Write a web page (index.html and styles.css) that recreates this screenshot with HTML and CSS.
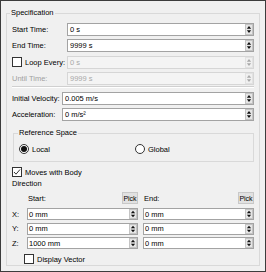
FILE: index.html
```html
<!DOCTYPE html>
<html>
<head>
<meta charset="utf-8">
<link rel="stylesheet" href="styles.css">
</head>
<body>
<div class="frame">
  <fieldset class="group">
    <legend>Specification</legend>
    <div class="form">
      <div class="row"><span class="lbl w55">Start Time:</span><div class="spin"><span class="val">0 s</span><span class="arr"><svg width="7" height="11" viewBox="0 0 7 11"><path d="M1 4.5 L3.5 1.5 L6 4.5 Z M1 6.5 L3.5 9.5 L6 6.5 Z"/></svg></span></div></div>
      <div class="row"><span class="lbl w55">End Time:</span><div class="spin"><span class="val">9999 s</span><span class="arr"><svg width="7" height="11" viewBox="0 0 7 11"><path d="M1 4.5 L3.5 1.5 L6 4.5 Z M1 6.5 L3.5 9.5 L6 6.5 Z"/></svg></span></div></div>
      <div class="row"><label class="chk w55"><span class="box"></span>Loop Every:</label><div class="spin dis"><span class="val">0 s</span><span class="arr"><svg width="7" height="11" viewBox="0 0 7 11"><path d="M1 4.5 L3.5 1.5 L6 4.5 Z M1 6.5 L3.5 9.5 L6 6.5 Z"/></svg></span></div></div>
      <div class="row"><span class="lbl w55 muted">Until Time:</span><div class="spin dis"><span class="val">9999 s</span><span class="arr"><svg width="7" height="11" viewBox="0 0 7 11"><path d="M1 4.5 L3.5 1.5 L6 4.5 Z M1 6.5 L3.5 9.5 L6 6.5 Z"/></svg></span></div></div>
    </div>
    <div class="sep"></div>
    <div class="form">
      <div class="row"><span class="lbl w50">Initial Velocity:</span><div class="spin"><span class="val">0.005 m/s</span><span class="arr"><svg width="7" height="11" viewBox="0 0 7 11"><path d="M1 4.5 L3.5 1.5 L6 4.5 Z M1 6.5 L3.5 9.5 L6 6.5 Z"/></svg></span></div></div>
      <div class="row"><span class="lbl w50">Acceleration:</span><div class="spin"><span class="val">0 m/s²</span><span class="arr"><svg width="7" height="11" viewBox="0 0 7 11"><path d="M1 4.5 L3.5 1.5 L6 4.5 Z M1 6.5 L3.5 9.5 L6 6.5 Z"/></svg></span></div></div>
    </div>
    <fieldset class="sub">
      <legend>Reference Space</legend>
      <div class="radios">
        <label class="rad"><span class="circle on"></span>Local</label>
        <label class="rad"><span class="circle"></span>Global</label>
      </div>
    </fieldset>
    <label class="chk moves"><span class="box"><svg width="8" height="8" viewBox="0 0 8 8"><path d="M1 4 L3 6.2 L7 1.5" fill="none" stroke="#333" stroke-width="1"/></svg></span>Moves with Body</label>
    <div class="dir-title">Direction</div>
    <div class="vec">
      <span class="axis"></span>
      <div class="vhead"><span class="htxt">Start:</span><span class="pick">Pick</span></div>
      <div class="vhead"><span class="htxt">End:</span><span class="pick">Pick</span></div>

      <span class="axis">X:</span>
      <div class="spin sm"><span class="val">0 mm</span><span class="arr"><svg width="7" height="10" viewBox="0 0 7 10"><path d="M1 4 L3.5 1.2 L6 4 Z M1 6 L3.5 8.8 L6 6 Z"/></svg></span></div>
      <div class="spin sm"><span class="val">0 mm</span><span class="arr"><svg width="7" height="10" viewBox="0 0 7 10"><path d="M1 4 L3.5 1.2 L6 4 Z M1 6 L3.5 8.8 L6 6 Z"/></svg></span></div>

      <span class="axis">Y:</span>
      <div class="spin sm"><span class="val">0 mm</span><span class="arr"><svg width="7" height="10" viewBox="0 0 7 10"><path d="M1 4 L3.5 1.2 L6 4 Z M1 6 L3.5 8.8 L6 6 Z"/></svg></span></div>
      <div class="spin sm"><span class="val">0 mm</span><span class="arr"><svg width="7" height="10" viewBox="0 0 7 10"><path d="M1 4 L3.5 1.2 L6 4 Z M1 6 L3.5 8.8 L6 6 Z"/></svg></span></div>

      <span class="axis">Z:</span>
      <div class="spin sm"><span class="val">1000 mm</span><span class="arr"><svg width="7" height="10" viewBox="0 0 7 10"><path d="M1 4 L3.5 1.2 L6 4 Z M1 6 L3.5 8.8 L6 6 Z"/></svg></span></div>
      <div class="spin sm"><span class="val">0 mm</span><span class="arr"><svg width="7" height="10" viewBox="0 0 7 10"><path d="M1 4 L3.5 1.2 L6 4 Z M1 6 L3.5 8.8 L6 6 Z"/></svg></span></div>
    </div>
    <label class="chk display"><span class="box"></span>Display Vector</label>
  </fieldset>
</div>
</body>
</html>
```
FILE: styles.css
```css
* { box-sizing: border-box; }
body {
  margin: 0;
  font-family: "Liberation Sans", Arial, sans-serif;
  font-size: 7.5px;
  color: #000;
  background: #f0f0f0;
}
.frame {
  width: 266px;
  height: 272px;
  border: 1px solid #3c3c3c;
  background: #f0f0f0;
  padding: 7px 5px 0 5px;
}
.group {
  margin: 0;
  height: 258px;
  border: 1px solid #d9d9d9;
  padding: 5px 5px 0 5px;
  min-width: 0;
}
.group > legend {
  padding: 0 1px;
  margin-left: -2px;
  line-height: 10px;
  height: 10px;
}
.form {
  display: flex;
  flex-direction: column;
  gap: 3.33px;
}
.row {
  display: flex;
  align-items: center;
  height: 13px;
}
.lbl { flex: none; white-space: nowrap; }
.w55 { width: 55px; }
.w50 { width: 50px; }
.muted { color: #a0a0a0; }
.spin {
  flex: 1;
  height: 13px;
  display: flex;
  align-items: center;
  background: #fff;
  border: 1px solid #a3a3a3;
  padding-left: 2px;
  min-width: 0;
}
.spin .val { flex: 1; white-space: nowrap; }
.spin .arr {
  flex: none;
  width: 8px;
  height: 11px;
  background: #e6e6e6;
  border: 1px solid #c4c4c4;
  display: flex;
  align-items: center;
  justify-content: center;
}
.spin .arr svg { display: block; fill: #111; }
.spin.dis {
  background: #f4f4f4;
  border-color: #d6d6d6;
  color: #a8a8a8;
}
.spin.dis .arr { background: #f0f0f0; border-color: #e2e2e2; }
.spin.dis .arr svg { fill: #a8a8a8; }
.chk {
  display: flex;
  align-items: center;
  white-space: nowrap;
}
.box {
  flex: none;
  width: 10px;
  height: 10px;
  border: 1px solid #333;
  background: #fff;
  margin-right: 3px;
  display: flex;
  align-items: center;
  justify-content: center;
}
.box svg { display: block; }
.sep {
  margin: 1px 0 4px 0;
  border-top: 1px solid #d0d0d0;
  border-bottom: 1px solid #fff;
}
.sub {
  margin: 6.7px 0 0 1px;
  border: 1px solid #d9d9d9;
  padding: 6px 5px 7px 5px;
  min-width: 0;
}
.sub > legend {
  padding: 0 1px;
  margin-left: -1px;
  line-height: 10px;
  height: 10px;
}
.radios {
  display: grid;
  grid-template-columns: 116px 1fr;
  height: 10px;
}
.rad {
  display: flex;
  align-items: center;
}
.circle {
  width: 10px;
  height: 10px;
  border-radius: 50%;
  border: 1px solid #333;
  background: #fff;
  margin-right: 3px;
  display: flex;
  align-items: center;
  justify-content: center;
}
.circle.on::after {
  content: "";
  width: 6px;
  height: 6px;
  border-radius: 50%;
  background: #111;
}
.moves { margin-top: 5px; height: 10px; }
.dir-title { margin-top: 2px; line-height: 10px; height: 10px; }
.vec {
  margin-top: 3px;
  display: grid;
  grid-template-columns: 10px 1fr 1fr;
  column-gap: 5px;
  row-gap: 2.5px;
}
.vhead {
  height: 12px;
  display: flex;
  align-items: center;
  justify-content: space-between;
  margin-bottom: 1.5px;
}
.htxt { padding-left: 1px; }
.pick {
  height: 12px;
  width: 16px;
  display: flex;
  align-items: center;
  justify-content: center;
  background: #e1e1e1;
  border: 1px solid #c8c8c8;
  font-size: 7px;
}
.axis { display: flex; align-items: center; height: 12px; }
.spin.sm { height: 12px; padding-left: 1px; }
.spin.sm .arr { height: 10px; }
.display { margin: 5px 0 0 12px; height: 10px; }
```
